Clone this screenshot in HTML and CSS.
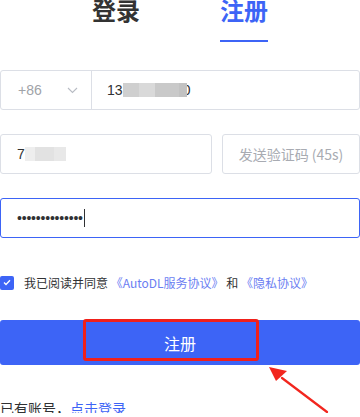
FILE: index.html
```html
<!DOCTYPE html>
<html lang="zh-CN">
<head>
    <meta charset="UTF-8">
    <meta name="viewport" content="width=device-width, initial-scale=1.0">
    <title>注册</title>
    <link rel="stylesheet" href="styles.css">
</head>
<body>
    <div class="register">
        <div class="tabs">
            <div class="tab">登录</div>
            <div class="tab active">注册</div>
        </div>

        <div class="phone-row">
            <div class="area-select">
                <span>+86</span>
                <svg class="chevron" width="11" height="7" viewBox="0 0 11 7"><path d="M1 1 L5.5 5.5 L10 1" fill="none" stroke="#b8bcc4" stroke-width="1.1"/></svg>
            </div>
            <div class="phone-input">13<span class="blur blur-phone"><i></i><i></i><i></i><i></i></span><span class="cut">0</span></div>
        </div>

        <div class="code-row">
            <div class="code-input">7<span class="blur blur-code"><i></i><i></i><i></i></span></div>
            <button class="send-code">发送验证码 (45s)</button>
        </div>

        <div class="password-input">
            <span class="dots">••••••••••••••</span><span class="caret"></span>
        </div>

        <label class="agree">
            <span class="checkbox">
                <svg width="8" height="7" viewBox="0 0 8 7"><path d="M1 3.5 L3 5.5 L7 1.2" fill="none" stroke="#fff" stroke-width="1.3"/></svg>
            </span>
            <span>我已阅读并同意 <a class="link">《AutoDL服务协议》</a> 和 <a class="link">《隐私协议》</a></span>
        </label>

        <div class="submit-wrap">
            <button class="submit">注册</button>
            <div class="highlight"></div>
        </div>

        <div class="login-tip">已有账号，<a class="login-link">点击登录</a></div>

        <!-- annotation arrow -->
        <svg class="arrow" width="70" height="50" viewBox="0 0 70 50">
            <path d="M59 46 L14 12" stroke="#f2261e" stroke-width="2.2" stroke-linecap="round"/>
            <path d="M1 1 L19 5 L8 15 Z" fill="#f2261e"/>
        </svg>
    </div>
</body>
</html>
```

FILE: styles.css
```css
body {
    margin: 0;
    background: #fff;
    font-family: "Liberation Sans", "Noto Sans CJK SC", sans-serif;
    color: #303133;
    overflow: hidden;
}

.register {
    position: relative;
    width: 360px;
    height: 417px;
}

.tabs {
    display: flex;
    justify-content: center;
    gap: 80px;
    margin-top: -4px;
}

.tab {
    font-family: "Noto Sans CJK SC", sans-serif;
    font-size: 24px;
    font-weight: bold;
    line-height: 28px;
    color: #333;
    padding-bottom: 16px;
    border-bottom: 2px solid transparent;
}

.tab.active {
    color: #3d64f6;
    border-bottom-color: #3d64f6;
}

.phone-row {
    display: flex;
    height: 40px;
    margin-top: 28px;
    border: 1px solid #dcdfe6;
    border-radius: 3px;
    box-sizing: border-box;
}

.area-select {
    width: 91px;
    display: flex;
    align-items: center;
    justify-content: space-between;
    padding: 0 13px 0 17px;
    box-sizing: border-box;
    border-right: 1px solid #dcdfe6;
    color: #a0a3a8;
    font-size: 14px;
}

.phone-input {
    flex: 1;
    display: flex;
    align-items: center;
    padding-left: 15px;
    font-size: 14px;
    color: #303133;
}

.blur {
    display: flex;
    height: 14px;
}

.blur i {
    display: block;
    height: 100%;
}

.blur-phone i:nth-child(1) { width: 16px; background: #cfcfcf; }
.blur-phone i:nth-child(2) { width: 16px; background: #d9d9d9; }
.blur-phone i:nth-child(3) { width: 24px; background: #c9c9c9; }
.blur-phone i:nth-child(4) { width: 8px; background: #c2c2c2; }

.blur-code i:nth-child(1) { width: 10px; background: #eeeeee; }
.blur-code i:nth-child(2) { width: 19px; background: #e2e2e2; }
.blur-code i:nth-child(3) { width: 12px; background: #e8e8e8; }

.cut {
    width: 4px;
    overflow: hidden;
    direction: rtl;
}

.code-row {
    display: flex;
    gap: 10px;
    margin-top: 24px;
}

.code-input {
    width: 212px;
    height: 40px;
    box-sizing: border-box;
    border: 1px solid #dcdfe6;
    border-radius: 3px;
    display: flex;
    align-items: center;
    padding-left: 16px;
    font-size: 14px;
    color: #303133;
}

.send-code {
    flex: 1;
    height: 40px;
    background: #fff;
    border: 1px solid #dcdfe6;
    border-radius: 3px;
    color: #a8abb2;
    font-family: "Noto Sans CJK SC", sans-serif;
    font-size: 14px;
    padding: 0;
}

.password-input {
    height: 40px;
    margin-top: 24px;
    box-sizing: border-box;
    border: 1px solid #3d64f6;
    border-radius: 3px;
    display: flex;
    align-items: center;
    padding-left: 16px;
}

.dots {
    font-family: "Liberation Sans", sans-serif;
    font-size: 14px;
    letter-spacing: -0.2px;
    color: #303133;
    line-height: 1;
}

.caret {
    width: 1px;
    height: 18px;
    background: #303133;
    margin-left: 1px;
}

.agree {
    display: flex;
    align-items: center;
    gap: 10px;
    margin-top: 36px;
    font-family: "Noto Sans CJK SC", sans-serif;
    font-size: 12px;
    color: #303133;
}

.checkbox {
    width: 14px;
    height: 14px;
    border-radius: 2px;
    background: #3d64f6;
    display: flex;
    align-items: center;
    justify-content: center;
}

.link {
    color: #6b7ef2;
}

.submit-wrap {
    position: relative;
    margin-top: 29px;
}

.submit {
    display: block;
    width: 100%;
    height: 45px;
    border: none;
    border-radius: 3px;
    background: #3d64f6;
    color: #fff;
    font-family: "Noto Sans CJK SC", sans-serif;
    font-size: 16px;
    padding: 0;
}

.highlight {
    position: absolute;
    left: 83px;
    top: -1px;
    width: 176px;
    height: 42px;
    box-sizing: border-box;
    border: 3px solid #f0201a;
    border-radius: 3px;
}

.login-tip {
    margin-top: 33px;
    font-family: "Noto Sans CJK SC", sans-serif;
    font-size: 14px;
    color: #303133;
}

.login-link {
    color: #3d64f6;
}

.arrow {
    position: absolute;
    left: 268px;
    top: 370px;
}
```
